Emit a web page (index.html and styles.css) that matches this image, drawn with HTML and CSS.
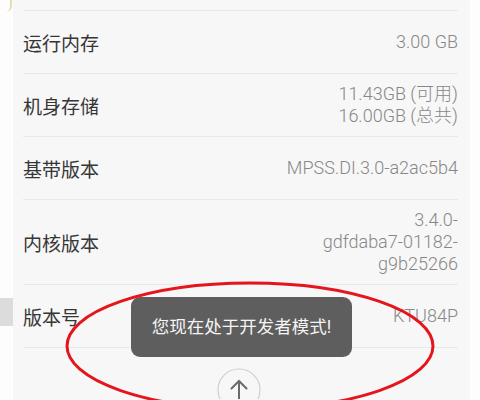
FILE: index.html
```html
<!DOCTYPE html>
<html>
<head>
  <meta charset="UTF-8">
  <title>关于手机</title>
  <link rel="stylesheet" href="styles.css">
</head>
<body>
  <div class="screen">
    <div class="side left">
      <span class="edge-mark"></span>
      <div class="ghost-toast"></div>
    </div>
    <div class="panel">
      <div class="row stub"></div>
      <div class="row">
        <div class="label">运行内存</div>
        <div class="value">3.00 GB</div>
      </div>
      <div class="row">
        <div class="label">机身存储</div>
        <div class="value">11.43GB (可用)<br>16.00GB (总共)</div>
      </div>
      <div class="row">
        <div class="label">基带版本</div>
        <div class="value">MPSS.DI.3.0-a2ac5b4</div>
      </div>
      <div class="row">
        <div class="label">内核版本</div>
        <div class="value">3.4.0-<br>gdfdaba7-01182-<br>g9b25266</div>
      </div>
      <div class="row">
        <div class="label">版本号</div>
        <div class="value">KTU84P</div>
      </div>
      <div class="footer">
        <span class="up-button">
          <svg width="44" height="44" viewBox="0 0 44 44">
            <circle cx="22" cy="22" r="21" fill="none" stroke="#cfcfcf" stroke-width="1.2"/>
            <path d="M22 13v18M14.5 20.5L22 13l7.5 7.5" fill="none" stroke="#6a6a6a" stroke-width="2" stroke-linecap="round"/>
          </svg>
        </span>
      </div>
    </div>
    <div class="side right"></div>

    <div class="toast">您现在处于开发者模式!</div>
    <svg class="circle-mark" width="480" height="400" viewBox="0 0 480 400">
      <ellipse cx="250" cy="346" rx="183" ry="63" fill="none" stroke="#e5151c" stroke-width="3"/>
    </svg>
  </div>
</body>
</html>
```

FILE: styles.css
```css
body {
  margin: 0;
  width: 480px;
  height: 400px;
  overflow: hidden;
  background: #fdfdfd;
  font-family: Roboto, "Noto Sans CJK SC", sans-serif;
}
.screen {
  position: relative;
  display: flex;
  height: 400px;
  overflow: hidden;
}
.side {
  background: #fdfdfd;
  position: relative;
}
.side.left {
  width: 13px;
}
.side.right {
  flex: 1;
}
.edge-mark {
  display: block;
  width: 4px;
  height: 12px;
  margin-left: 6px;
  border-right: 2px solid #e6dcae;
  border-radius: 0 0 6px 0;
}
.ghost-toast {
  position: absolute;
  left: 0;
  top: 298px;
  width: 13px;
  height: 28px;
  background: #dcdcdc;
}
.panel {
  width: 435px;
  padding: 0 12px 0 10px;
  background: #f7f7f7;
}
.row {
  display: flex;
  justify-content: space-between;
  align-items: center;
  box-sizing: border-box;
  min-height: 63px;
  padding: 9px 0;
  border-bottom: 1px solid #e9e9e9;
}
.row.stub {
  min-height: 11px;
  height: 11px;
  padding: 0;
}
.label {
  font-size: 19px;
  color: #363636;
}
.value {
  font-size: 18px;
  font-weight: 300;
  line-height: 22px;
  color: #878787;
  text-align: right;
}
.footer {
  display: flex;
  justify-content: center;
  height: 51px;
  overflow: hidden;
  box-sizing: border-box;
  padding-top: 20px;
  padding-right: 4px;
}
.up-button {
  display: block;
  width: 44px;
  height: 44px;
}
.toast {
  position: absolute;
  left: 131px;
  top: 297px;
  width: 221px;
  height: 60px;
  border-radius: 9px;
  background: #5e5e5e;
  color: #f4f4f4;
  font-size: 17.5px;
  line-height: 60px;
  text-align: center;
}
.circle-mark {
  position: absolute;
  left: 0;
  top: 0;
  pointer-events: none;
}
```
